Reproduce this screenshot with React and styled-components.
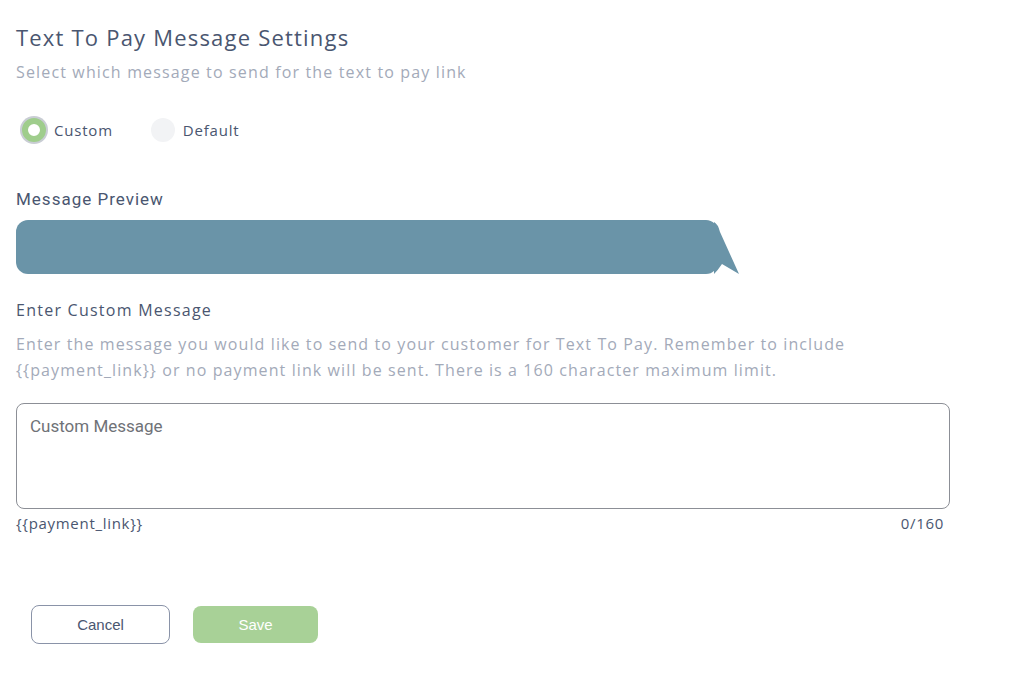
import { useState } from "react";
import styled, { createGlobalStyle } from "styled-components";

const GlobalStyle = createGlobalStyle`
  body {
    margin: 0;
    background: #ffffff;
    font-family: "Open Sans", "Noto Sans", sans-serif;
  }
`;

function App() {
  const [choice, setChoice] = useState("custom");
  const [message, setMessage] = useState("");

  return (
    <Page>
      <GlobalStyle />
      <Title>Text To Pay Message Settings</Title>
      <Subtitle>Select which message to send for the text to pay link</Subtitle>

      <Radios>
        <RadioLabel onClick={() => setChoice("custom")}>
          <RadioDot checked={choice === "custom"} />
          Custom
        </RadioLabel>
        <RadioLabel onClick={() => setChoice("default")}>
          <RadioDot checked={choice === "default"} />
          Default
        </RadioLabel>
      </Radios>

      <PreviewLabel>Message Preview</PreviewLabel>
      <BubbleWrap>
        <Bubble>{message}</Bubble>
        <Tail width="26" height="54" viewBox="0 0 26 54">
          <path d="M0 2 Q4 4 6 12 L25 54 L8 44 Q4 50 0 54 Z" fill="#6a94a8" />
        </Tail>
      </BubbleWrap>

      <SectionTitle>Enter Custom Message</SectionTitle>
      <Description>
        Enter the message you would like to send to your customer for Text To
        Pay. Remember to include {"{{payment_link}}"} or no payment link will be
        sent. There is a 160 character maximum limit.
      </Description>

      <TextArea
        placeholder="Custom Message"
        maxLength={160}
        value={message}
        onChange={(e) => setMessage(e.target.value)}
      />
      <Meta>
        <span>{"{{payment_link}}"}</span>
        <span>{message.length}/160</span>
      </Meta>

      <Actions>
        <CancelButton>Cancel</CancelButton>
        <SaveButton>Save</SaveButton>
      </Actions>
    </Page>
  );
}

export default App;

const Page = styled.div`
  padding: 23px 0 0 16px;
  width: 934px;
`;

const Title = styled.h1`
  margin: 0;
  font-size: 22px;
  font-weight: 500;
  line-height: 28px;
  color: #4a5670;
  letter-spacing: 1.2px;
`;

const Subtitle = styled.p`
  margin: 11px 0 0;
  font-size: 16px;
  line-height: 20px;
  color: #a3aab9;
  letter-spacing: 1.15px;
`;

const Radios = styled.div`
  display: flex;
  gap: 38px;
  margin-top: 36px;
  margin-left: 6px;
`;

const RadioLabel = styled.label`
  display: flex;
  align-items: center;
  gap: 8px;
  font-size: 15px;
  line-height: 24px;
  color: #4a5670;
  letter-spacing: 0.8px;
  cursor: pointer;
`;

const RadioDot = styled.span`
  box-sizing: border-box;
  width: 24px;
  height: 24px;
  border-radius: 50%;
  background: ${(p) => (p.checked ? "#ffffff" : "#f2f3f5")};
  border: ${(p) => (p.checked ? "6px solid #9fcd8c" : "none")};
  box-shadow: ${(p) => (p.checked ? "0 0 0 2px #c9cdd4" : "none")};
`;

const PreviewLabel = styled.h2`
  margin: 47px 0 0;
  font-family: Roboto, "Liberation Sans", sans-serif;
  font-size: 17px;
  font-weight: 400;
  line-height: 20px;
  color: #4a5670;
  letter-spacing: 1px;
`;

const BubbleWrap = styled.div`
  display: flex;
  align-items: flex-start;
  margin-top: 11px;
  width: 724px;
`;

const Bubble = styled.div`
  flex: 1;
  height: 54px;
  background: #6a94a8;
  border-radius: 12px;
  color: #ffffff;
  font-size: 14px;
  padding: 0 16px;
  display: flex;
  align-items: center;
`;

const Tail = styled.svg`
  display: block;
  margin-left: -4px;
  flex-shrink: 0;
`;

const SectionTitle = styled.h2`
  margin: 26px 0 0;
  font-size: 16px;
  font-weight: 500;
  line-height: 20px;
  color: #4a5670;
  letter-spacing: 1.25px;
`;

const Description = styled.p`
  margin: 11px 0 0;
  width: 860px;
  font-size: 16px;
  line-height: 26px;
  color: #a3aab9;
  letter-spacing: 1.1px;
`;

const TextArea = styled.textarea`
  display: block;
  box-sizing: border-box;
  margin-top: 20px;
  width: 934px;
  height: 106px;
  padding: 12px 13px;
  border: 1px solid #8c8f96;
  border-radius: 8px;
  resize: none;
  font-family: Roboto, "Liberation Sans", sans-serif;
  font-size: 17px;
  color: #333;
  outline: none;
  &::placeholder {
    color: #6f7277;
  }
`;

const Meta = styled.div`
  display: flex;
  justify-content: space-between;
  width: 928px;
  margin-top: 4px;
  font-size: 15px;
  line-height: 20px;
  color: #4a5670;
  letter-spacing: 0.7px;
`;

const Actions = styled.div`
  display: flex;
  gap: 23px;
  margin-top: 72px;
  margin-left: 15px;
`;

const CancelButton = styled.button`
  box-sizing: border-box;
  width: 139px;
  height: 39px;
  background: #ffffff;
  border: 1px solid #8a93a8;
  border-radius: 8px;
  font-family: "Liberation Sans", Arial, sans-serif;
  font-size: 15px;
  color: #4a5670;
  cursor: pointer;
`;

const SaveButton = styled.button`
  box-sizing: border-box;
  width: 125px;
  height: 37px;
  margin-top: 1px;
  background: #a8d197;
  border: none;
  border-radius: 8px;
  font-family: "Liberation Sans", Arial, sans-serif;
  font-size: 15px;
  color: #ffffff;
  cursor: pointer;
`;
